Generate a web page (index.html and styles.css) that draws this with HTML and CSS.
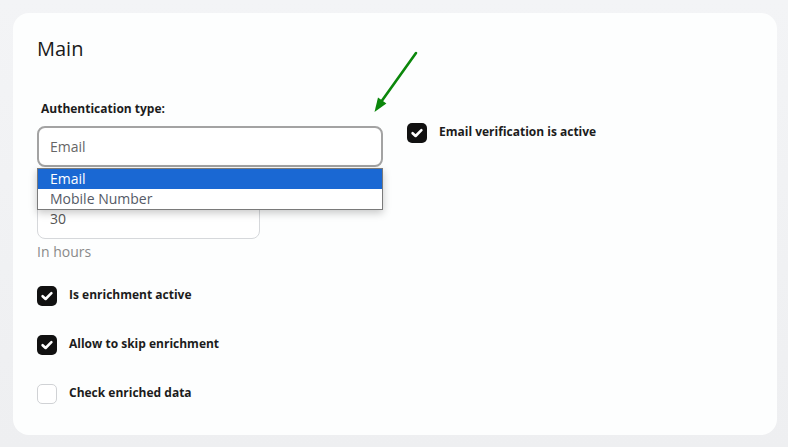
FILE: index.html
```html
<!DOCTYPE html>
<html>
<head>
<meta charset="utf-8">
<link rel="stylesheet" href="styles.css">
</head>
<body>
<div class="card">
  <h2 class="title">Main</h2>
  <div class="grid">
    <div class="col-left">
      <div class="field">
        <label class="label">Authentication type:</label>
        <div class="select-wrap">
          <div class="select">Email</div>
          <ul class="dropdown">
            <li class="opt active">Email</li>
            <li class="opt">Mobile Number</li>
          </ul>
        </div>
      </div>
      <div class="field field-2">
        <div class="spacer"></div>
        <div class="input">30</div>
        <div class="hint">In hours</div>
      </div>
      <div class="check-row first">
        <span class="box checked"><svg viewBox="0 0 20 20" width="20" height="20"><path d="M5.6 10.2 L8.6 13 L14.4 7.2" fill="none" stroke="#fff" stroke-width="2.6" stroke-linecap="round" stroke-linejoin="round"/></svg></span>
        <span class="check-label">Is enrichment active</span>
      </div>
      <div class="check-row">
        <span class="box checked"><svg viewBox="0 0 20 20" width="20" height="20"><path d="M5.6 10.2 L8.6 13 L14.4 7.2" fill="none" stroke="#fff" stroke-width="2.6" stroke-linecap="round" stroke-linejoin="round"/></svg></span>
        <span class="check-label">Allow to skip enrichment</span>
      </div>
      <div class="check-row">
        <span class="box"></span>
        <span class="check-label">Check enriched data</span>
      </div>
    </div>
    <div class="col-right">
      <div class="check-row">
        <span class="box checked"><svg viewBox="0 0 20 20" width="20" height="20"><path d="M5.6 10.2 L8.6 13 L14.4 7.2" fill="none" stroke="#fff" stroke-width="2.6" stroke-linecap="round" stroke-linejoin="round"/></svg></span>
        <span class="check-label">Email verification is active</span>
      </div>
    </div>
  </div>
  <svg class="arrow" width="60" height="80" viewBox="360 40 60 80">
    <line x1="416" y1="53" x2="381" y2="102" stroke="#0b870b" stroke-width="2.6" stroke-linecap="round"/>
    <polygon points="374.5,112 378,97.6 386.4,103.6" fill="#0b870b"/>
  </svg>
</div>
</body>
</html>
```

FILE: styles.css
```css
* { box-sizing: border-box; }
html, body { margin: 0; padding: 0; }
body {
  width: 788px;
  height: 447px;
  padding: 13px 11px 12px 13px;
  background: linear-gradient(180deg, #f3f4f6 0%, #eeeff1 100%);
  font-family: "Open Sans", "Noto Sans", sans-serif;
  overflow: hidden;
}
.card {
  position: relative;
  width: 764px;
  height: 422px;
  background: #fdfefe;
  border-radius: 16px;
  padding: 22px 24px 0 24px;
}
.title {
  margin: 0;
  font-size: 20px;
  line-height: 27px;
  font-weight: 400;
  color: #1a1a1a;
}
.grid {
  display: grid;
  grid-template-columns: 346px 1fr;
  column-gap: 24px;
  margin-top: 39px;
}
.field { display: flex; flex-direction: column; }
.label {
  font-size: 12px;
  line-height: 15px;
  font-weight: 700;
  color: #1c1c1c;
  padding-left: 4px;
  margin-bottom: 10px;
}
.select-wrap { position: relative; }
.select {
  height: 41px;
  border: 2px solid #a3a3a3;
  border-radius: 8px;
  padding-left: 11px;
  font-size: 14px;
  line-height: 37px;
  color: #666;
  background: #fff;
}
.dropdown {
  position: absolute;
  left: 0;
  top: 42px;
  width: 346px;
  margin: 0;
  padding: 0;
  list-style: none;
  background: #fff;
  border: 1px solid #7a7a7a;
  box-shadow: 0 3px 8px rgba(0,0,0,0.22);
  z-index: 5;
}
.opt {
  height: 20px;
  line-height: 20px;
  font-size: 14px;
  padding-left: 12px;
  color: #555a66;
}
.opt.active { background: #1a68d3; color: #fff; }
.spacer { height: 31px; }
.input {
  width: 223px;
  height: 41px;
  border: 1px solid #d6d8db;
  border-radius: 8px;
  padding-left: 12px;
  font-size: 14px;
  line-height: 39px;
  color: #555;
  background: #fff;
}
.hint {
  margin-top: 3px;
  font-size: 14px;
  line-height: 20px;
  color: #8a8a8a;
}
.check-row {
  display: flex;
  align-items: center;
  gap: 12px;
  height: 20px;
  margin-top: 29px;
}
.check-row.first { margin-top: 24px; }
.col-right { padding-top: 22px; }
.col-right .check-row { margin-top: 0; }
.box {
  width: 20px;
  height: 20px;
  flex: none;
  border-radius: 5px;
  border: 1px solid #d0d2d5;
  background: #fff;
  display: block;
}
.box svg { display: block; }
.box.checked { background: #111; border: none; }
.check-label {
  font-size: 12px;
  line-height: 16px;
  font-weight: 700;
  color: #1c1c1c;
  margin-top: -2px;
}
.arrow {
  position: absolute;
  left: 347px;
  top: 27px;
}
```
